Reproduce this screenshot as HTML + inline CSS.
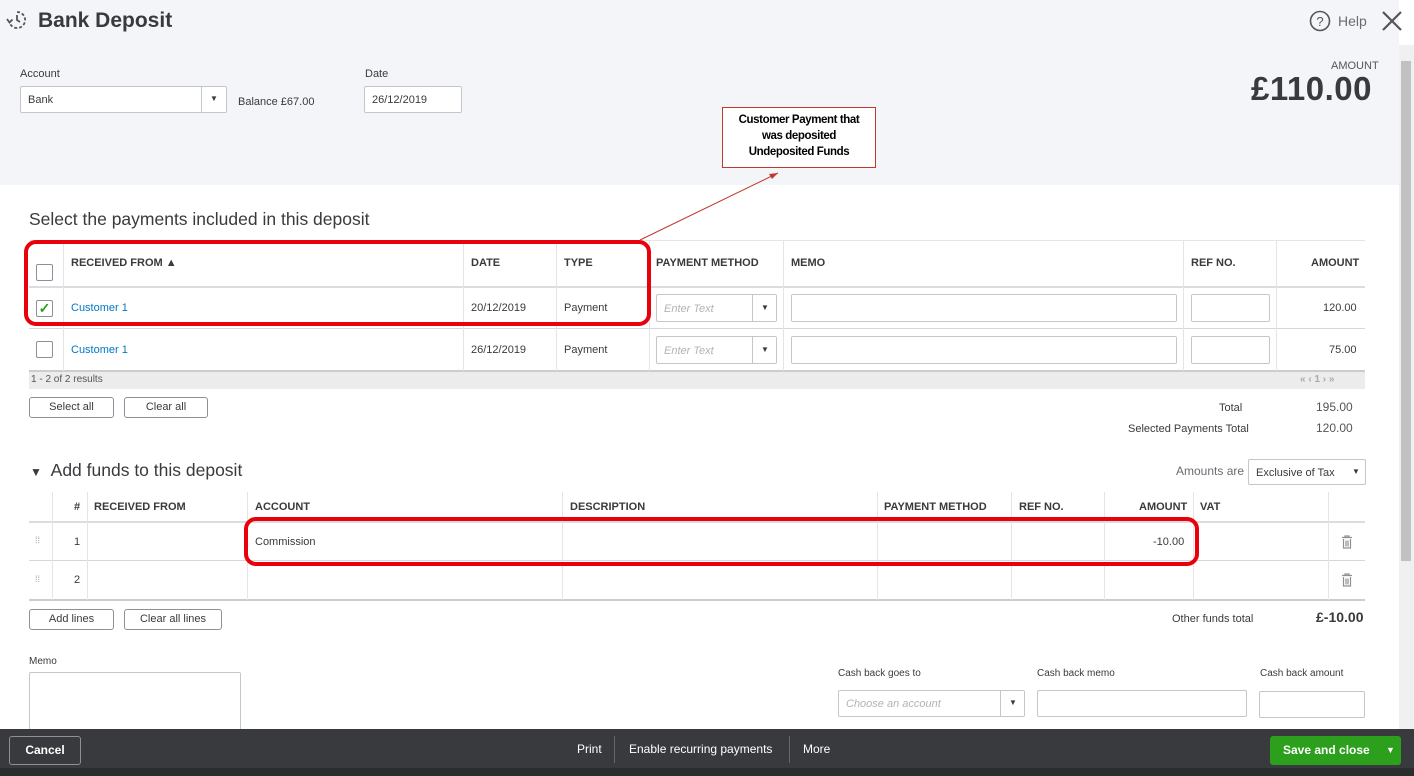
<!DOCTYPE html>
<html><head><meta charset="utf-8"><style>
*{box-sizing:border-box;margin:0;padding:0}
body{width:1414px;height:776px;overflow:hidden;position:relative;background:#fff;font-family:"Liberation Sans",sans-serif;color:#393a3d;font-size:11px}
.a{position:absolute}
.hdr{left:0;top:0;width:1399px;height:185px;background:#f4f5f8}
.inp{position:absolute;background:#fff;border:1px solid #c4c6ca;border-radius:2px}
.lbl{position:absolute;font-size:11px;color:#393a3d}
.th{position:absolute;font-size:11px;font-weight:bold;color:#393a3d}
.hl{position:absolute;height:1px;background:#d4d7dc}
.vl{position:absolute;width:1px;background:#e3e5e8}
.btn{position:absolute;border:1px solid #8d9096;border-radius:3px;background:#fff;font-size:11px;text-align:center;line-height:18px;color:#393a3d}
.cb{position:absolute;width:17px;height:17px;border:1px solid #8d9096;border-radius:2px;background:#fff}
.red{position:absolute;border:4px solid #e8000b;border-radius:12px}
.link{color:#0077c5}
.ph{font-style:italic;color:#b0b3b8}
</style></head><body>
<div class="a hdr"></div>
<svg class="a" style="left:6px;top:9px" width="22" height="22" viewBox="0 0 22 22" fill="none" stroke="#555" stroke-width="1.8"><path d="M11 3a8 8 0 1 1-7.5 10.5" stroke-dasharray="3 2"/><path d="M11 6v5l3 2"/><path d="M1 10l2.5 3.5 3-3"/></svg>
<div class="a" style="left:38px;top:9px;font-size:21px;font-weight:bold;color:#393a3d">Bank Deposit</div>
<svg class="a" style="left:1309px;top:10px" width="22" height="22" viewBox="0 0 22 22"><circle cx="11" cy="11" r="9.5" fill="none" stroke="#555" stroke-width="1.6"/><text x="11" y="16" font-size="13" font-family="Liberation Sans" text-anchor="middle" fill="#555">?</text></svg>
<div class="a" style="left:1338px;top:13px;font-size:14px;color:#6b6c72">Help</div>
<svg class="a" style="left:1381px;top:10px" width="22" height="22" viewBox="0 0 22 22" stroke="#555" stroke-width="2.2"><path d="M2 2l18 18M20 2L2 20"/></svg>
<div class="lbl" style="left:20px;top:68px">Account</div>
<div class="inp" style="left:20px;top:86px;width:207px;height:27px"><span style="position:absolute;left:7px;top:7px">Bank</span><div style="position:absolute;left:180px;top:0;width:1px;height:25px;background:#c4c6ca"></div><span style="position:absolute;left:189px;top:7px;font-size:8px">▼</span></div>
<div class="lbl" style="left:238px;top:96px">Balance £67.00</div>
<div class="lbl" style="left:365px;top:68px">Date</div>
<div class="inp" style="left:364px;top:86px;width:98px;height:27px"><span style="position:absolute;left:7px;top:7px">26/12/2019</span></div>
<div class="a" style="left:1331px;top:60px;font-size:11px;color:#555">AMOUNT</div>
<div class="a" style="left:1251px;top:70px;font-size:33px;font-weight:bold;color:#393a3d;letter-spacing:0.5px">£110.00</div>
<div class="a" style="left:1399px;top:45px;width:15px;height:686px;background:#f0f0f0"></div>
<div class="a" style="left:1401px;top:61px;width:10px;height:500px;background:#c1c1c1"></div>
<div class="a" style="left:722px;top:107px;width:154px;height:61px;border:1px solid #c0392b;background:#fff;font-size:11.5px;font-weight:bold;text-align:center;line-height:16px;padding:4px 6px 0;color:#000;letter-spacing:-.4px">Customer Payment that was deposited Undeposited Funds</div>
<svg class="a" style="left:630px;top:165px" width="160" height="80"><path d="M10 75L148 8" stroke="#c0392b" stroke-width="1"/><path d="M148 8l-9 1 3 5z" fill="#c0392b"/></svg>
<div class="a" style="left:29px;top:209px;font-size:17.5px;color:#393a3d">Select the payments included in this deposit</div>
<div class="hl" style="left:29px;top:240px;width:1336px;background:#e3e5e8"></div>
<div class="hl" style="left:29px;top:286px;width:1336px;height:2px;background:#dadcdf"></div>
<div class="hl" style="left:29px;top:328px;width:1336px"></div>
<div class="hl" style="left:29px;top:370px;width:1336px;height:2px;background:#c9ccd0"></div>
<div class="vl" style="left:63px;top:240px;height:131px"></div>
<div class="vl" style="left:463px;top:240px;height:131px"></div>
<div class="vl" style="left:556px;top:240px;height:131px"></div>
<div class="vl" style="left:649px;top:240px;height:131px"></div>
<div class="vl" style="left:783px;top:240px;height:131px"></div>
<div class="vl" style="left:1183px;top:240px;height:131px"></div>
<div class="vl" style="left:1276px;top:240px;height:131px"></div>
<div class="cb" style="left:36px;top:264px"></div>
<div class="th" style="left:71px;top:257px">RECEIVED FROM ▲</div>
<div class="th" style="left:471px;top:257px">DATE</div>
<div class="th" style="left:564px;top:257px">TYPE</div>
<div class="th" style="left:656px;top:257px">PAYMENT METHOD</div>
<div class="th" style="left:791px;top:257px">MEMO</div>
<div class="th" style="left:1191px;top:257px">REF NO.</div>
<div class="th" style="left:1311px;top:257px">AMOUNT</div>
<div class="cb" style="left:36px;top:300px;color:#2ca01c;font-size:14px;line-height:15px;text-align:center;font-weight:bold">✓</div>
<div class="a link" style="left:71px;top:302px">Customer 1</div>
<div class="a" style="left:471px;top:302px">20/12/2019</div>
<div class="a" style="left:564px;top:302px">Payment</div>
<div class="inp" style="left:656px;top:294px;width:121px;height:28px"><span class="ph" style="position:absolute;left:7px;top:8px">Enter Text</span><div style="position:absolute;left:95px;top:0;width:1px;height:26px;background:#c4c6ca"></div><span style="position:absolute;left:104px;top:8px;font-size:8px">▼</span></div>
<div class="inp" style="left:791px;top:294px;width:386px;height:28px"></div>
<div class="inp" style="left:1191px;top:294px;width:79px;height:28px"></div>
<div class="a" style="left:1323px;top:302px">120.00</div>
<div class="cb" style="left:36px;top:341px"></div>
<div class="a link" style="left:71px;top:344px">Customer 1</div>
<div class="a" style="left:471px;top:344px">26/12/2019</div>
<div class="a" style="left:564px;top:344px">Payment</div>
<div class="inp" style="left:656px;top:336px;width:121px;height:28px"><span class="ph" style="position:absolute;left:7px;top:8px">Enter Text</span><div style="position:absolute;left:95px;top:0;width:1px;height:26px;background:#c4c6ca"></div><span style="position:absolute;left:104px;top:8px;font-size:8px">▼</span></div>
<div class="inp" style="left:791px;top:336px;width:386px;height:28px"></div>
<div class="inp" style="left:1191px;top:336px;width:79px;height:28px"></div>
<div class="a" style="left:1329px;top:344px">75.00</div>
<div class="a" style="left:29px;top:372px;width:1336px;height:17px;background:#ececec"></div>
<div class="a" style="left:31px;top:374px;font-size:10px;color:#555">1 - 2 of 2 results</div>
<div class="a" style="left:1300px;top:374px;font-size:10px;color:#aaa;font-weight:bold">« ‹ 1 › »</div>
<div class="red" style="left:24px;top:240px;width:627px;height:86px"></div>
<div class="btn" style="left:29px;top:397px;width:85px;height:21px">Select all</div>
<div class="btn" style="left:124px;top:397px;width:84px;height:21px">Clear all</div>
<div class="a" style="left:1219px;top:402px">Total</div>
<div class="a" style="left:1316px;top:400px;font-size:12px;color:#555">195.00</div>
<div class="a" style="left:1128px;top:423px">Selected Payments Total</div>
<div class="a" style="left:1316px;top:421px;font-size:12px;color:#555">120.00</div>
<div class="a" style="left:30px;top:460px;font-size:17.5px;color:#393a3d"><span style="font-size:12px">▼</span>&nbsp; Add funds to this deposit</div>
<div class="a" style="left:1176px;top:464px;font-size:12px;color:#6b6c72">Amounts are</div>
<div class="inp" style="left:1248px;top:459px;width:118px;height:26px"><span style="position:absolute;left:7px;top:7px">Exclusive of Tax</span><span style="position:absolute;left:103px;top:7px;font-size:8px">▼</span></div>
<div class="hl" style="left:29px;top:521px;width:1336px;height:2px;background:#dadcdf"></div>
<div class="hl" style="left:29px;top:560px;width:1336px"></div>
<div class="hl" style="left:29px;top:599px;width:1336px;height:2px;background:#c9ccd0"></div>
<div class="vl" style="left:52px;top:492px;height:108px"></div>
<div class="vl" style="left:87px;top:492px;height:108px"></div>
<div class="vl" style="left:247px;top:492px;height:108px"></div>
<div class="vl" style="left:562px;top:492px;height:108px"></div>
<div class="vl" style="left:877px;top:492px;height:108px"></div>
<div class="vl" style="left:1011px;top:492px;height:108px"></div>
<div class="vl" style="left:1104px;top:492px;height:108px"></div>
<div class="vl" style="left:1193px;top:492px;height:108px"></div>
<div class="vl" style="left:1328px;top:492px;height:108px"></div>
<div class="th" style="left:74px;top:501px">#</div>
<div class="th" style="left:94px;top:501px">RECEIVED FROM</div>
<div class="th" style="left:255px;top:501px">ACCOUNT</div>
<div class="th" style="left:570px;top:501px">DESCRIPTION</div>
<div class="th" style="left:884px;top:501px">PAYMENT METHOD</div>
<div class="th" style="left:1019px;top:501px">REF NO.</div>
<div class="th" style="left:1139px;top:501px">AMOUNT</div>
<div class="th" style="left:1200px;top:501px">VAT</div>
<div class="a" style="left:35px;top:535px;color:#999;font-size:9px">⁞⁞</div>
<div class="a" style="left:74px;top:536px">1</div>
<div class="a" style="left:255px;top:536px">Commission</div>
<div class="a" style="left:1153px;top:536px">-10.00</div>
<div class="a" style="left:35px;top:574px;color:#999;font-size:9px">⁞⁞</div>
<div class="a" style="left:74px;top:574px">2</div>
<svg class="a" style="left:1341px;top:535px" width="12" height="14" fill="none" stroke="#8d9096" stroke-width="1.2"><path d="M1 2.5h10M4 2.5V1h4v1.5M2.5 4v9h7V4M5 5.5v6M7 5.5v6"/></svg>
<svg class="a" style="left:1341px;top:573px" width="12" height="14" fill="none" stroke="#8d9096" stroke-width="1.2"><path d="M1 2.5h10M4 2.5V1h4v1.5M2.5 4v9h7V4M5 5.5v6M7 5.5v6"/></svg>
<div class="red" style="left:244px;top:517px;width:955px;height:49px"></div>
<div class="btn" style="left:29px;top:609px;width:85px;height:21px">Add lines</div>
<div class="btn" style="left:124px;top:609px;width:98px;height:21px">Clear all lines</div>
<div class="a" style="left:1172px;top:613px">Other funds total</div>
<div class="a" style="left:1316px;top:609px;font-size:14px;font-weight:bold">£-10.00</div>
<div class="lbl" style="left:29px;top:656px;font-size:10px">Memo</div>
<div class="inp" style="left:29px;top:672px;width:212px;height:60px"></div>
<div class="lbl" style="left:838px;top:668px;font-size:10px">Cash back goes to</div>
<div class="lbl" style="left:1037px;top:668px;font-size:10px">Cash back memo</div>
<div class="lbl" style="left:1260px;top:668px;font-size:10px">Cash back amount</div>
<div class="inp" style="left:838px;top:690px;width:187px;height:27px"><span class="ph" style="position:absolute;left:7px;top:7px">Choose an account</span><div style="position:absolute;left:161px;top:0;width:1px;height:25px;background:#c4c6ca"></div><span style="position:absolute;left:170px;top:7px;font-size:8px">▼</span></div>
<div class="inp" style="left:1037px;top:690px;width:210px;height:27px"></div>
<div class="inp" style="left:1259px;top:691px;width:106px;height:27px"></div>
<div class="a" style="left:0;top:729px;width:1414px;height:47px;background:#393a3d"></div>
<div class="a" style="left:0;top:768px;width:1414px;height:8px;background:#2b2c2e"></div>
<div class="a" style="left:9px;top:736px;width:72px;height:29px;border:1px solid #8d9096;border-radius:3px;color:#fff;font-size:12px;text-align:center;line-height:27px;font-weight:bold">Cancel</div>
<div class="a" style="left:577px;top:742px;color:#fff;font-size:12px">Print</div>
<div class="a" style="left:614px;top:736px;width:1px;height:27px;background:#666"></div>
<div class="a" style="left:629px;top:742px;color:#fff;font-size:12px">Enable recurring payments</div>
<div class="a" style="left:789px;top:736px;width:1px;height:27px;background:#666"></div>
<div class="a" style="left:803px;top:742px;color:#fff;font-size:12px">More</div>
<div class="a" style="left:1270px;top:736px;width:131px;height:29px;background:#2ca01c;border-radius:3px;color:#fff;font-size:12px;font-weight:bold;line-height:29px;padding-left:13px">Save and close <span style="position:absolute;left:116px;font-size:9px">▼</span></div>
</body></html>
